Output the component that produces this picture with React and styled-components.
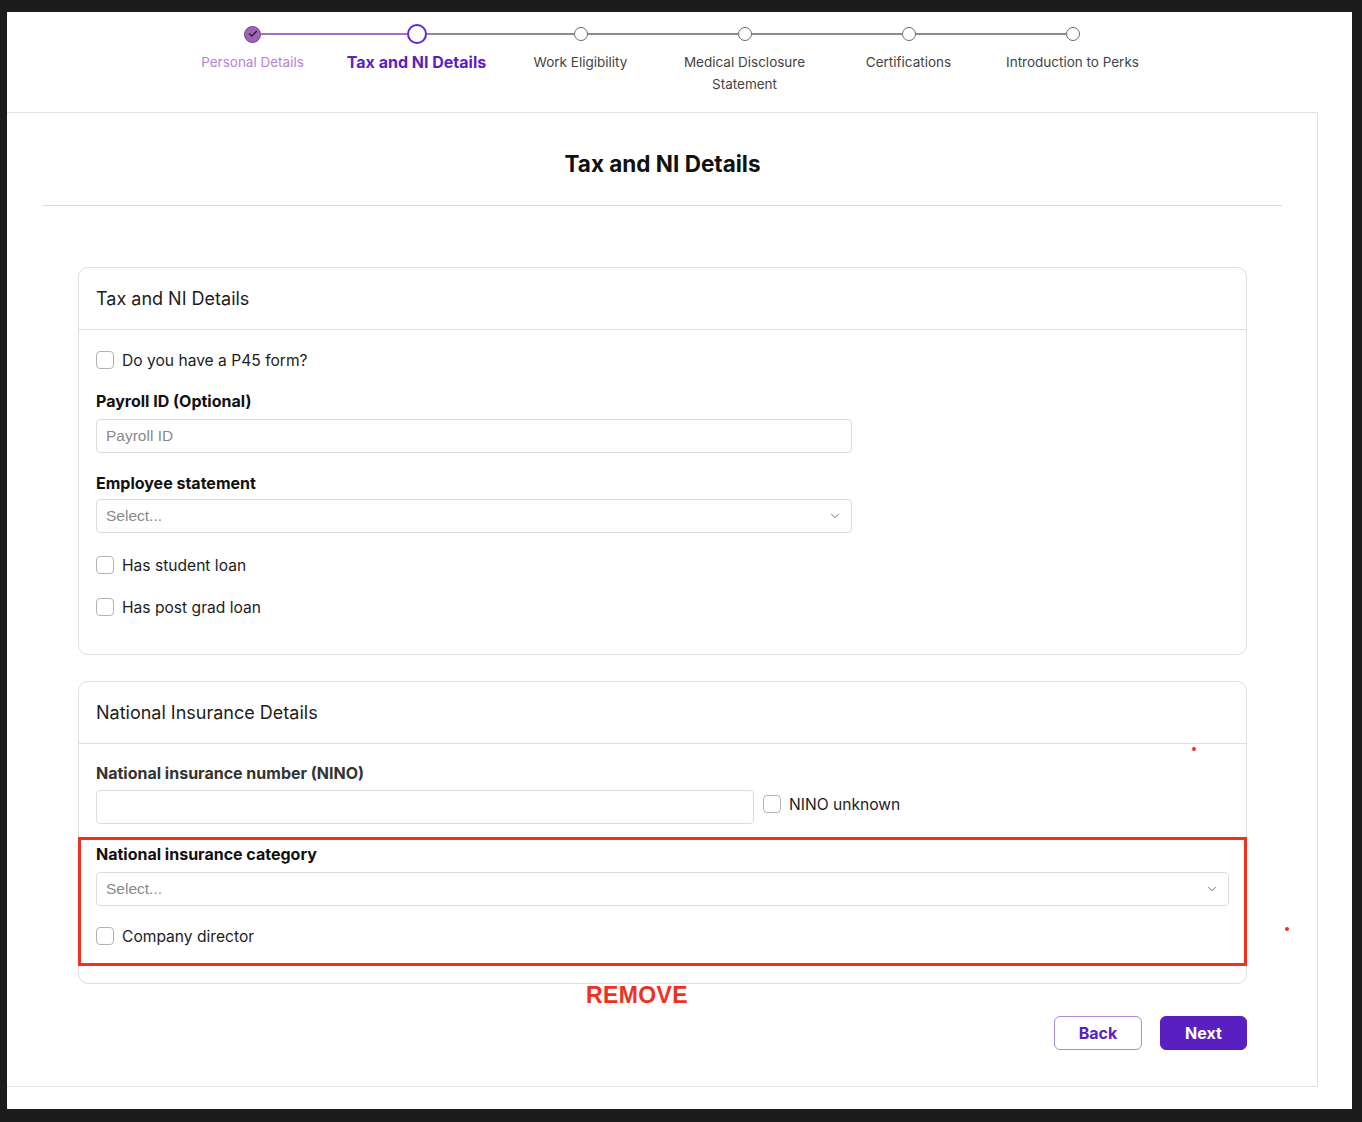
import styled, { createGlobalStyle } from "styled-components";
import { ChevronDown, Check } from "lucide-react";

const GlobalStyle = createGlobalStyle`
  html, body {
    margin: 0;
    padding: 0;
    background: #1c1c1c;
  }
  body {
    font-family: "Inter", "Liberation Sans", sans-serif;
    color: #1d1d1f;
  }
  * {
    box-sizing: border-box;
  }
`;

const Frame = styled.div`
  margin: 12px 10px 0 7px;
  height: 1097px;
  background: #fff;
`;

const Column = styled.div`
  width: 1311px;
`;

const Stepper = styled.ol`
  list-style: none;
  margin: 0;
  padding: 12px 0 0;
  height: 100px;
  display: flex;
  justify-content: center;
`;

const Step = styled.li`
  width: 164px;
  display: flex;
  flex-direction: column;
  align-items: center;
`;

const Track = styled.div`
  width: 100%;
  height: 20px;
  display: flex;
  align-items: center;
`;

const Line = styled.span`
  flex: 1;
  height: 2px;
  background: ${(p) => (p.$hidden ? "transparent" : p.$done ? "#a76fc6" : "#8c8c8c")};
`;

const Dot = styled.span`
  flex: none;
  display: flex;
  align-items: center;
  justify-content: center;
  border-radius: 50%;
  width: ${(p) => (p.$state === "active" ? "20px" : p.$state === "done" ? "17px" : "14px")};
  height: ${(p) => (p.$state === "active" ? "20px" : p.$state === "done" ? "17px" : "14px")};
  background: ${(p) => (p.$state === "done" ? "#9c63b8" : "#fff")};
  border: ${(p) =>
    p.$state === "active"
      ? "2px solid #6128d0"
      : p.$state === "done"
      ? "1.5px solid #6e4683"
      : "1.5px solid #6b6b6b"};
  color: #1a1a1a;
`;

const StepLabel = styled.span`
  margin-top: 7px;
  max-width: 140px;
  text-align: center;
  font-size: ${(p) => (p.$state === "active" ? "16px" : "13.5px")};
  font-weight: ${(p) => (p.$state === "active" ? 700 : 400)};
  line-height: 22px;
  color: ${(p) =>
    p.$state === "active" ? "#5b1fc2" : p.$state === "done" ? "#b584d1" : "#444"};
`;

const Panel = styled.section`
  position: relative;
  height: 975px;
  border: 1px solid #e2e2e2;
  border-left: none;
  padding: 0 35px 36px 36px;
  display: flex;
  flex-direction: column;
`;

const PageTitle = styled.h1`
  margin: 0;
  padding: 38px 0 28px;
  border-bottom: 1px solid #dcdcdc;
  text-align: center;
  font-size: 22.5px;
  line-height: 26px;
  font-weight: 700;
  color: #111;
`;

const Cards = styled.div`
  padding: 61px 35px 0;
  display: flex;
  flex-direction: column;
  gap: 26px;
`;

const Card = styled.div`
  position: relative;
  border: 1px solid #dedede;
  border-radius: 10px;
`;

const CardHeader = styled.div`
  height: 62px;
  padding: 0 17px;
  display: flex;
  align-items: center;
  border-bottom: 1px solid #dedede;
  font-size: 18px;
  color: #1d1d1f;
`;

const CardBody = styled.div`
  padding: ${(p) => p.$pad || "21px 17px 38px"};
  display: flex;
  flex-direction: column;
`;

const CheckRow = styled.label`
  display: flex;
  align-items: center;
  gap: 8px;
  height: 18px;
  margin-top: ${(p) => p.$mt || "0"};
  font-size: 15.6px;
  color: #1d1d1f;
`;

const Box = styled.span`
  width: 18px;
  height: 18px;
  border: 1.5px solid #b3b3b3;
  border-radius: 4px;
  background: #fff;
  flex: none;
`;

const FieldLabel = styled.div`
  margin-top: ${(p) => p.$mt || "0"};
  margin-bottom: ${(p) => p.$mb || "8px"};
  font-size: 16px;
  line-height: 20px;
  font-weight: 700;
  color: ${(p) => (p.$muted ? "#333" : "#111")};
`;

const Input = styled.div`
  width: ${(p) => p.$w || "100%"};
  height: 34px;
  border: 1px solid #dcdcdc;
  border-radius: 4px;
  padding: 0 9px;
  display: flex;
  align-items: center;
  justify-content: space-between;
  font-size: 15.5px;
  color: #8a8a8a;
  font-family: "Liberation Sans", sans-serif;
`;

const InlineRow = styled.div`
  display: flex;
  align-items: flex-start;
  gap: 9px;
  & > label {
    margin-top: 5px;
  }
`;

const RemoveZone = styled.div`
  margin: 13px -18px 0;
  padding: 4px 15px 18px;
  border: 3px solid #f2301f;
  display: flex;
  flex-direction: column;
`;

const RemoveNote = styled.div`
  position: absolute;
  left: 507px;
  bottom: -26px;
  font-family: "Liberation Sans", sans-serif;
  font-size: 23px;
  font-weight: 700;
  color: #f2301f;
  letter-spacing: 0.4px;
`;

const Marker = styled.span`
  position: absolute;
  width: 4px;
  height: 4px;
  border-radius: 50%;
  background: #f2301f;
`;

const Actions = styled.div`
  margin-top: auto;
  padding-right: 35px;
  display: flex;
  justify-content: flex-end;
  gap: 18px;
`;

const Button = styled.button`
  width: ${(p) => (p.$primary ? "87px" : "88px")};
  height: 34px;
  border-radius: 6px;
  border: 1.5px solid ${(p) => (p.$primary ? "#5a1fc0" : "#a98bdc")};
  background: ${(p) => (p.$primary ? "#5a1fc0" : "#fff")};
  color: ${(p) => (p.$primary ? "#fff" : "#5a1fc0")};
  font-family: "Inter", sans-serif;
  font-size: 16px;
  font-weight: 700;
  cursor: pointer;
`;

const steps = [
  { label: "Personal Details", state: "done" },
  { label: "Tax and NI Details", state: "active" },
  { label: "Work Eligibility", state: "todo" },
  { label: "Medical Disclosure Statement", state: "todo" },
  { label: "Certifications", state: "todo" },
  { label: "Introduction to Perks", state: "todo" },
];

const Checkbox = ({ children, mt }) => (
  <CheckRow $mt={mt}>
    <Box />
    {children}
  </CheckRow>
);

const Select = ({ w }) => (
  <Input $w={w}>
    Select...
    <ChevronDown size={14} strokeWidth={1.5} color="#666" />
  </Input>
);

export default function App() {
  return (
    <>
      <GlobalStyle />
      <Frame>
        <Column>
          <Stepper>
            {steps.map((s, i) => (
              <Step key={s.label}>
                <Track>
                  <Line $hidden={i === 0} $done={i <= 1} />
                  <Dot $state={s.state}>
                    {s.state === "done" && <Check size={10} strokeWidth={3} />}
                  </Dot>
                  <Line $hidden={i === steps.length - 1} $done={i === 0} />
                </Track>
                <StepLabel $state={s.state}>{s.label}</StepLabel>
              </Step>
            ))}
          </Stepper>

          <Panel>
            <PageTitle>Tax and NI Details</PageTitle>
            <Cards>
              <Card>
                <CardHeader>Tax and NI Details</CardHeader>
                <CardBody>
                  <Checkbox>Do you have a P45 form?</Checkbox>
                  <FieldLabel $mt="22px">Payroll ID (Optional)</FieldLabel>
                  <Input $w="756px">Payroll ID</Input>
                  <FieldLabel $mt="20px" $mb="6px">Employee statement</FieldLabel>
                  <Select w="756px" />
                  <Checkbox mt="23px">Has student loan</Checkbox>
                  <Checkbox mt="24px">Has post grad loan</Checkbox>
                </CardBody>
              </Card>

              <Card>
                <CardHeader>National Insurance Details</CardHeader>
                <CardBody $pad="19px 17px 17px">
                  <FieldLabel $muted $mb="7px">National insurance number (NINO)</FieldLabel>
                  <InlineRow>
                    <Input $w="658px" />
                    <Checkbox>NINO unknown</Checkbox>
                  </InlineRow>
                  <RemoveZone>
                    <FieldLabel>National insurance category</FieldLabel>
                    <Select />
                    <Checkbox mt="21px">Company director</Checkbox>
                  </RemoveZone>
                </CardBody>
                <RemoveNote>REMOVE</RemoveNote>
              </Card>
            </Cards>

            <Actions>
              <Button>Back</Button>
              <Button $primary>Next</Button>
            </Actions>

            <Marker style={{ left: 1185, top: 634 }} />
            <Marker style={{ left: 1278, top: 814 }} />
          </Panel>
        </Column>
      </Frame>
    </>
  );
}
